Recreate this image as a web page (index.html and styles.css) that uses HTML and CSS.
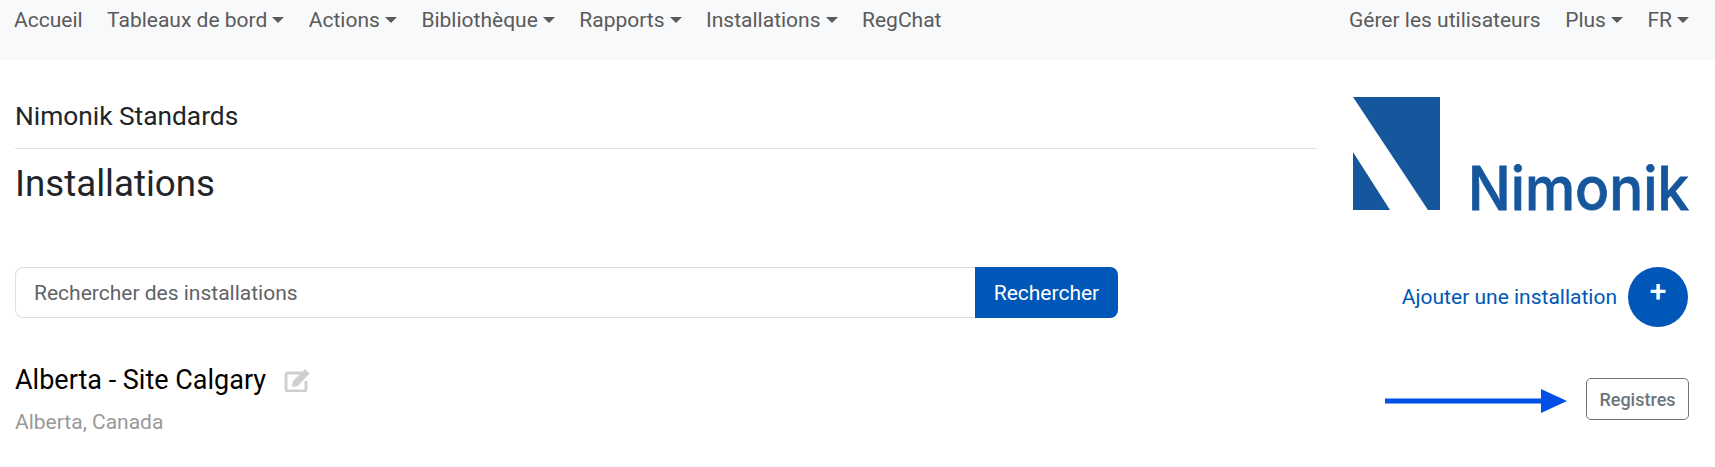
FILE: index.html
```html
<!DOCTYPE html>
<html lang="fr">
<head>
<meta charset="utf-8">
<title>Installations</title>
<link rel="stylesheet" href="styles.css">
</head>
<body>
<nav class="navbar">
  <div class="nav-group">
    <a class="nav-link">Accueil</a>
    <a class="nav-link caret">Tableaux de bord</a>
    <a class="nav-link caret">Actions</a>
    <a class="nav-link caret">Bibliothèque</a>
    <a class="nav-link caret">Rapports</a>
    <a class="nav-link caret">Installations</a>
    <a class="nav-link">RegChat</a>
  </div>
  <div class="nav-group">
    <a class="nav-link">Gérer les utilisateurs</a>
    <a class="nav-link caret">Plus</a>
    <a class="nav-link caret">FR</a>
  </div>
</nav>
<main class="page">
  <section class="header-row">
    <div class="titles">
      <div class="org">Nimonik Standards</div>
      <h1 class="title">Installations</h1>
    </div>
    <svg class="logo" width="336" height="113" viewBox="0 0 336 113">
      <polygon points="0,0 87,0 87,113 75,113" fill="#15569c"/>
      <polygon points="0,55 37,113 0,113" fill="#15569c"/>
      <text x="115" y="112.500" class="logo-text" textLength="221" lengthAdjust="spacingAndGlyphs">Nimonik</text>
    </svg>
  </section>
  <section class="action-row">
    <form class="search">
      <input class="search-input" type="text" placeholder="Rechercher des installations">
      <button class="search-btn" type="button">Rechercher</button>
    </form>
    <div class="add">
      <a class="add-link">Ajouter une installation</a>
      <span class="add-btn">+</span>
    </div>
  </section>
  <section class="item">
    <div class="item-info">
      <div class="item-name">
        <span>Alberta - Site Calgary</span>
        <svg class="edit" width="26" height="23" viewBox="0 0 26 23">
          <path d="M18 4H4a2 2 0 0 0-2 2v14a2 2 0 0 0 2 2h16a2 2 0 0 0 2-2v-8" fill="none" stroke="#cfcfcf" stroke-width="3"/>
          <path d="M9 12l-1 6 6-1L25.500 4.500l-4.500-4.500z" fill="#cfcfcf"/>
        </svg>
      </div>
      <div class="item-place">Alberta, Canada</div>
    </div>
    <div class="item-actions">
      <svg class="arrow" width="182" height="24" viewBox="0 0 182 24">
        <rect x="0" y="9.500" width="158" height="5" fill="#004fe6"/>
        <polygon points="156,0 182,12 156,24" fill="#004fe6"/>
      </svg>
      <button class="registers" type="button">Registres</button>
    </div>
  </section>
</main>
</body>
</html>
```

FILE: styles.css
```css
* { box-sizing: border-box; }
html, body { margin: 0; padding: 0; }
body {
  font-family: Roboto, "Liberation Sans", sans-serif;
  background: #fff;
  color: #212529;
  font-size: 21px;
  overflow: hidden;
}
.navbar {
  display: flex;
  justify-content: space-between;
  height: 60px;
  background: #f8f9fa;
  padding: 6px 26px 0 14px;
}
.nav-group { display: flex; gap: 24.500px; }
.nav-link {
  color: #5a5a5a;
  font-size: 21px;
  line-height: 28px;
  white-space: nowrap;
}
.caret::after {
  content: "";
  display: inline-block;
  margin-left: 5px;
  vertical-align: 4px;
  border-top: 6px solid #5a5a5a;
  border-left: 6px solid transparent;
  border-right: 6px solid transparent;
}
.page { padding: 0 26px 0 15px; }
.header-row {
  display: flex;
  justify-content: space-between;
  padding-top: 37px;
}
.titles { width: 1302px; }
.org {
  font-size: 26.300px;
  line-height: 32px;
  padding: 3px 0 16px;
  border-bottom: 1px solid #dee2e6;
  color: #212529;
}
.title {
  margin: 13px 0 0;
  font-size: 36.700px;
  font-weight: 400;
  line-height: 43px;
}
.logo { display: block; overflow: visible; filter: blur(0.4px); }
.logo-text {
  font-family: Inter, sans-serif;
  font-size: 60px;
  font-weight: 500;
  fill: #15569c;
  stroke: #15569c;
  stroke-width: 0.8px;
}
.action-row {
  display: flex;
  justify-content: space-between;
  align-items: flex-start;
  margin-top: 57px;
}
.search { display: flex; width: 1103px; height: 51px; }
.search-input {
  flex: 1;
  min-width: 0;
  border: 1px solid #dedede;
  border-right: 0;
  border-radius: 8px 0 0 8px;
  padding: 0 18px;
  font: inherit;
  color: #5a5f66;
  outline: none;
}
.search-input::placeholder { color: #5f6368; opacity: 1; }
.search-btn {
  width: 143px;
  border: 0;
  border-radius: 0 8px 8px 0;
  background: #0057b8;
  color: #fff;
  font: inherit;
}
.add { display: flex; align-items: center; gap: 11px; margin-right: 1px; }
.add-link { color: #0057b8; }
.add-btn {
  display: flex;
  justify-content: center;
  width: 60px;
  height: 60px;
  border-radius: 50%;
  background: #0057b8;
  color: #fff;
  font-size: 30px;
  font-weight: 500;
  line-height: 48px;
}
.item {
  display: flex;
  justify-content: space-between;
  margin-top: 39px;
}
.item-name {
  display: flex;
  align-items: center;
  gap: 17px;
  color: #000;
  font-size: 27px;
  line-height: 28px;
}
.edit { display: block; width: 28px; margin-top: 1px; }
.item-place {
  margin-top: 17px;
  color: #999;
  line-height: 22px;
}
.item-actions {
  display: flex;
  align-items: center;
  gap: 19px;
  margin-top: 12px;
  height: 42px;
}
.arrow { display: block; margin-top: 4px; }
.registers {
  width: 103px;
  height: 42px;
  border: 1px solid #6c757d;
  border-radius: 5px;
  background: #fff;
  color: #6c757d;
  font: inherit;
  font-size: 18px;
  font-weight: 500;
}
```
